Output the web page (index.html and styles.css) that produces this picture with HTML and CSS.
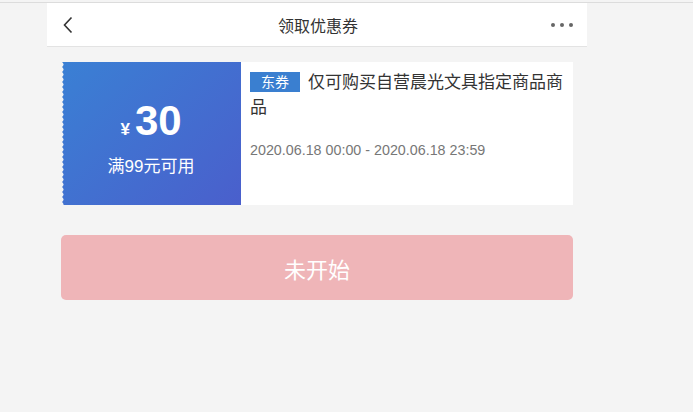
FILE: index.html
```html
<!DOCTYPE html>
<html lang="zh">
<head>
    <meta charset="UTF-8">
    <title>领取优惠券</title>
    <link rel="stylesheet" href="styles.css">
</head>
<body>
    <div class="topline"></div>
    <div class="page">
        <div class="header">
            <span class="back">
                <svg width="10" height="18" viewBox="0 0 10 18"><path d="M8.5 1.5 L1.5 9 L8.5 16.5" fill="none" stroke="#333" stroke-width="1.6"/></svg>
            </span>
            <span class="title">领取优惠券</span>
            <span class="more"><i></i><i></i><i></i></span>
        </div>

        <div class="content">
            <div class="coupon">
                <div class="coupon-left">
                    <div class="amount"><span class="yen">¥</span>30</div>
                    <div class="limit">满99元可用</div>
                </div>
                <div class="coupon-right">
                    <div class="name"><span class="tag">东券</span>仅可购买自营晨光文具指定商品商品</div>
                    <div class="date">2020.06.18 00:00 - 2020.06.18 23:59</div>
                </div>
            </div>

            <button class="get-btn">未开始</button>
        </div>
    </div>
</body>
</html>
```

FILE: styles.css
```css
body {
    margin: 0;
    padding-top: 2px;
    background: #f4f4f4;
    font-family: "Liberation Sans", "Noto Sans CJK SC", sans-serif;
    color: #333;
}

.topline {
    height: 1px;
    background: #dcdcdc;
}

.page {
    margin-left: 47px;
    width: 540px;
}

.header {
    height: 43px;
    background: #fff;
    border-bottom: 1px solid #e3e3e3;
    display: flex;
    align-items: center;
    justify-content: space-between;
    padding: 0 14px 0 16px;
}

.back {
    display: flex;
    width: 30px;
}

.title {
    font-size: 16px;
    color: #333;
}

.more {
    display: flex;
    gap: 5px;
    width: 30px;
    justify-content: flex-end;
}

.more i {
    width: 4px;
    height: 4px;
    border-radius: 50%;
    background: #666;
}

.content {
    padding: 15px 14px;
}

.coupon {
    display: flex;
    height: 143px;
    background: #fff;
}

.coupon-left {
    width: 180px;
    background:
        radial-gradient(circle at 0 50%, #f4f4f4 2.2px, transparent 2.8px) left top / 5px 5px repeat-y,
        linear-gradient(135deg, #3a80d4, #4a5fcc);
    color: #fff;
    display: flex;
    flex-direction: column;
    align-items: center;
    justify-content: center;
}

.amount {
    font-size: 42px;
    font-weight: bold;
    line-height: 44px;
    margin-top: 9px;
}

.yen {
    font-size: 17px;
    margin-right: 5px;
}

.limit {
    font-size: 17px;
    margin-top: 0;
}

.coupon-right {
    flex: 1;
    padding: 8px 8px 0 9px;
}

.name {
    font-size: 17px;
    line-height: 25px;
    color: #333;
}

.tag {
    display: inline-block;
    background: #3a7fd0;
    color: #fff;
    font-size: 14px;
    line-height: 20px;
    padding: 0 11px;
    margin-right: 8px;
    vertical-align: 1px;
}

.date {
    font-size: 14.3px;
    color: #777;
    margin-top: 22px;
}

.get-btn {
    display: block;
    width: 100%;
    height: 65px;
    margin-top: 30px;
    border: none;
    border-radius: 5px;
    background: #efb5b8;
    color: #fff;
    font-size: 22px;
    font-family: inherit;
}
```
